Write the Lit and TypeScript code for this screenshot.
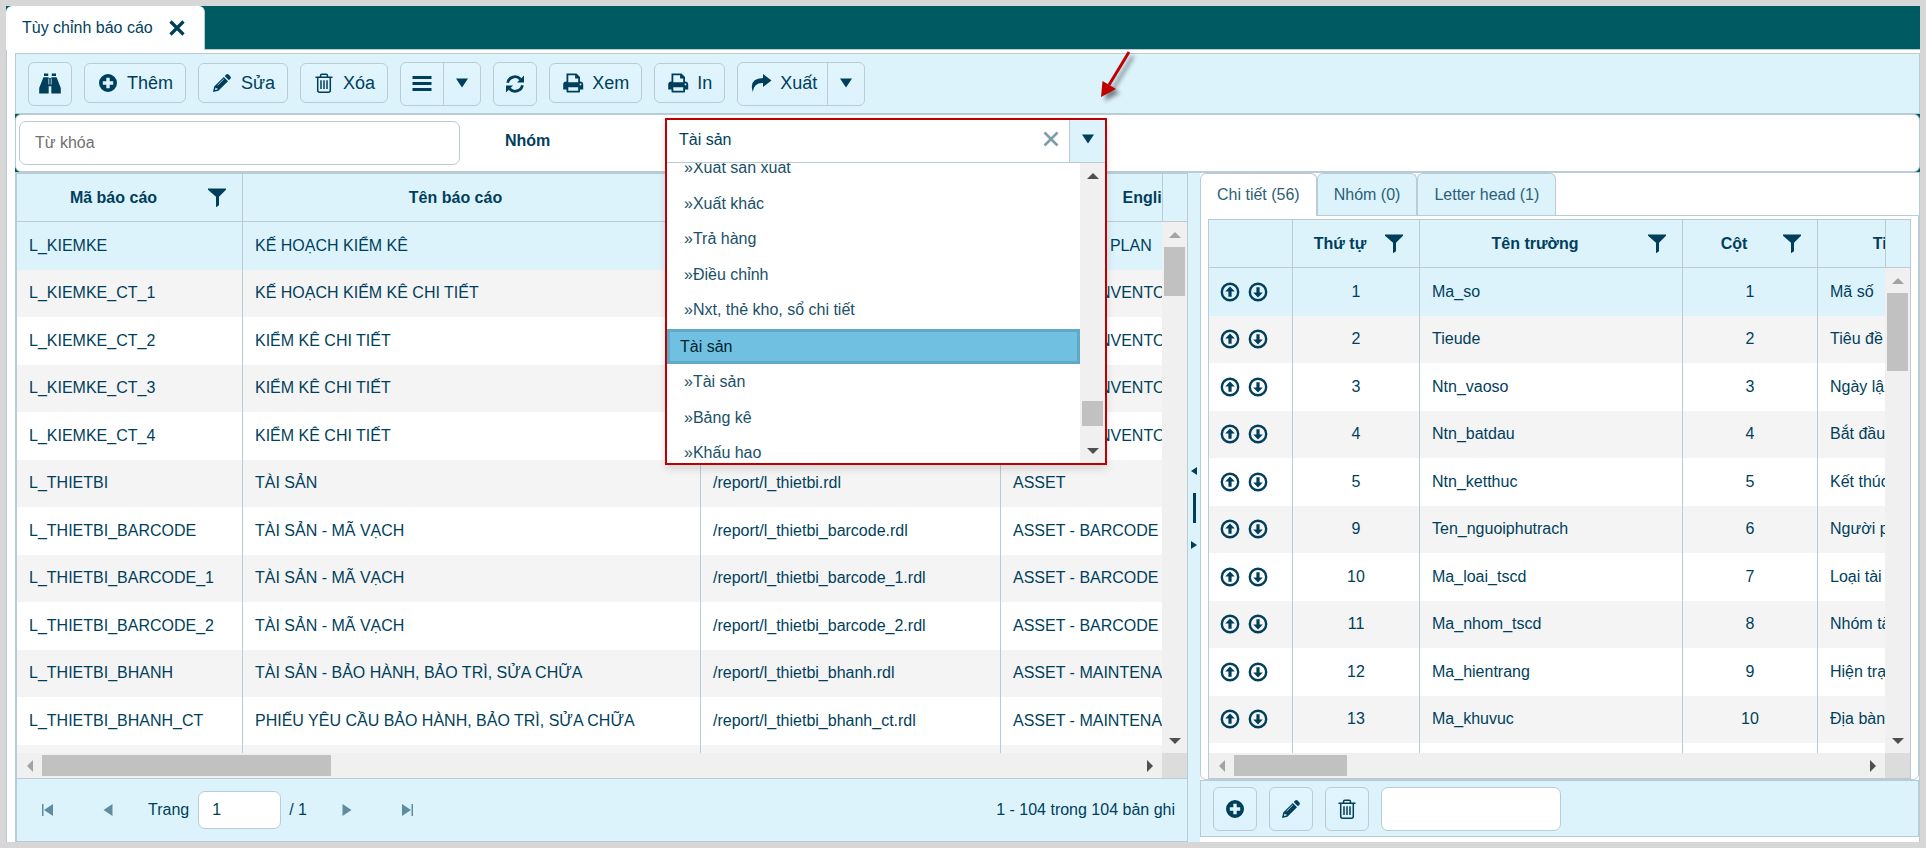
import { LitElement, html, css, svg } from "lit";
import { customElement, property, state } from "lit/decorators.js";
import { classMap } from "lit/directives/class-map.js";

const shared = css`
  :host, *, *::before, *::after { box-sizing: border-box; }
  button, input { font: inherit; color: inherit; margin: 0; }
  button { background: none; border: 0; padding: 0; cursor: pointer; }
  svg { display: block; flex: none; }
`;

const glyphs: Record<string, unknown> = {
  binoculars: svg`<path d="M5 .5h4.200v2.600H5zM12.800.5H17v2.600h-4.200zM4.400 4.200h5.300v16.300H.2v-5.500zM12.300 4.200h5.300l4.200 10.800v5.500h-9.500zM9.700 5h2.600v8.200H9.700z"/><path d="M9.800 5.500v6M12.200 5.500v6" stroke="#dcf3fc" stroke-width=".8"/>`,
  plus: svg`<path fill-rule="evenodd" d="M11 2a9 9 0 1 0 0 18a9 9 0 0 0 0-18zM9.300 5.800h3.400v3.500h3.500v3.400h-3.500v3.500H9.300v-3.500H5.800V9.300h3.500z"/>`,
  pencil: svg`<path d="M15.200 2.600q1.200-1.200 2.400 0l1.800 1.800q1.200 1.200 0 2.400l-1.500 1.500-4.200-4.200z"/><path fill-rule="evenodd" d="M12.800 5l4.200 4.200-9.600 9.600L2 20l1.200-5.400zM4.600 15.600l-.7 2.500 2.500-.7v-1.200H5.200z"/><path d="M6.600 13.200l6.200-6.200" stroke="#dcf3fc" stroke-width=".8" fill="none"/>`,
  trash: svg`<g fill="none" stroke="currentColor" stroke-width="1.500"><path d="M2.500 5.200h17M7.500 5V3.700q0-1.500 1.500-1.500h4q1.500 0 1.500 1.500V5M4.700 5.200v13q0 2 2 2h8.600q2 0 2-2v-13M8 8.300v8.600M11 8.300v8.600M14 8.300v8.600"/></g>`,
  bars: svg`<path d="M1.500 4h19v3h-19zM1.500 10h19v3h-19zM1.500 16h19v3h-19z"/>`,
  refresh: svg`<g fill="none" stroke="currentColor" stroke-width="2.800"><path d="M3.600 9.800A7.500 7.500 0 0 1 16.500 6.200M18.400 12.200A7.500 7.500 0 0 1 5.500 15.800"/></g><path d="M20 2.500v7h-7zM2 19.500v-7h7z"/>`,
  print: svg`<path fill-rule="evenodd" d="M4.500 1.500h10l3.500 3.500v4.500q3.200 0 3.200 3v5.100H18v2q0 .9-.9.900H5.400q-.9 0-.9-.9v-2H1.200v-5.100q0-3 3.300-3zM6.300 3.200v7h9.900V6.500h-3.100V3.200zM6.300 15.300v3.500h9.900v-3.500zM18.500 11.500a.9.9 0 1 0 .01 0z"/>`,
  share: svg`<path d="M13 2l8.500 6.500L13 15v-4Q4 10.500 2.800 20Q-1.500 6.500 13 6z"/>`,
  filter: svg`<path d="M2 1.500h18v1.200l-7 7v8.600l-3 2V9.700L2 2.700z"/>`,
  close: svg`<path d="M4.500 4.500l13 13M17.500 4.500l-13 13" stroke="currentColor" stroke-width="3.200" fill="none"/>`,
  clear: svg`<path d="M4.500 4.500l13 13M17.500 4.500l-13 13" stroke="currentColor" stroke-width="2.600" fill="none"/>`,
  caret: svg`<path d="M5 6.500h12L11 15.500z"/>`,
  moveUp: svg`<circle cx="11" cy="11" r="8.200" fill="none" stroke="currentColor" stroke-width="2.400"/><path d="M11 5.500l4.800 5h-3.200v5.300H9.400v-5.300H6.200z"/>`,
  moveDown: svg`<circle cx="11" cy="11" r="8.200" fill="none" stroke="currentColor" stroke-width="2.400"/><path d="M11 16.500l-4.800-5h3.200V6.200h3.200v5.300h3.200z"/>`,
  prev: svg`<path d="M6.500 11L15.500 5v12z"/>`,
  next: svg`<path d="M15.500 11L6.500 5v12z"/>`,
  first: svg`<path d="M7 11L16 5v12zM5 5h1.500v12H5z"/>`,
  last: svg`<path d="M15 11L6 5v12zM15.500 5H17v12h-1.500z"/>`,
};

@customElement("ui-icon")
class UiIcon extends LitElement {
  @property() name = "";
  @property({ type: Number }) size = 22;
  static styles = css`:host { display: block; flex: none; } svg { display: block; fill: currentColor; }`;
  render() {
    return html`<svg width=${this.size} height=${this.size} viewBox="0 0 22 22" aria-hidden="true">${glyphs[this.name]}</svg>`;
  }
}

@customElement("scroll-track")
class ScrollTrack extends LitElement {
  @property({ reflect: true }) dir = "v";
  @property({ type: Number }) before = 0;
  @property({ type: Number }) thumb = 50;
  @property({ type: Boolean }) atStart = false;
  static styles = css`
    :host { display: flex; background: #f0f0f0; overflow: hidden; }
    .track { flex: 1; display: flex; flex-direction: column; min-width: 0; min-height: 0; }
    .arrow { flex: none; width: 25px; height: 25px; display: grid; place-items: center; color: #4f4f4f; }
    .dim { color: #a3a3a3; }
    .rail { flex: 1; padding: 0 2px; }
    .thumb { background: #c1c1c1; }
    svg { display: block; fill: currentColor; }
    .h { flex-direction: row; }
    .h .rail { padding: 2px 0; display: flex; }
  `;
  render() {
    const h = this.dir === "h";
    const size = h
      ? `margin-left:${this.before}px;width:${this.thumb}px`
      : `margin-top:${this.before}px;height:${this.thumb}px`;
    return html`<div class=${classMap({ track: true, h })}>
      <span class=${classMap({ arrow: true, dim: this.atStart })}>
        <svg width="12" height="12"><path d=${h ? "M9 0v12L3 6z" : "M0 9h12L6 3z"} /></svg>
      </span>
      <div class="rail"><div class="thumb" style=${size}></div></div>
      <span class="arrow"><svg width="12" height="12"><path d=${h ? "M3 0v12l6-6z" : "M0 3h12L6 9z"} /></svg></span>
    </div>`;
  }
}

interface Column { title: string; width: number; center?: boolean; plain?: boolean }

@customElement("data-grid")
class DataGrid extends LitElement {
  @property({ attribute: false }) columns: Column[] = [];
  @property({ attribute: false }) rows: unknown[][] = [];
  @property({ type: Number }) vThumb = 50;
  @property({ type: Number }) hThumb = 289;
  @property() label = "";
  @state() selected = 0;
  static styles = [shared, css`
    :host { display: grid; grid-template: 48px minmax(0, 1fr) 25px / minmax(0, 1fr) 25px; min-height: 0; }
    .view { grid-area: 1 / 1 / 3 / 2; overflow: hidden; min-height: 0; }
    table { table-layout: fixed; border-collapse: separate; border-spacing: 0; }
    th { height: 48px; padding: 0; background: #dcf3fc; border-right: 1px solid #b9ccd5; border-bottom: 1px solid #b9ccd5; }
    .head { display: flex; align-items: center; padding-right: 14px; }
    .title { flex: 1; white-space: nowrap; }
    .head button { margin-left: -4px; }
    td { height: 47px; padding: 0 12px 1px; border-right: 1px solid #b9ccd5; white-space: nowrap; overflow: hidden; background: #fff; }
    tr:nth-child(odd) td { height: 48px; }
    tr:nth-child(even) td { background: #f4f4f4; }
    tr.on td { background: #dcf3fc; }
    td.center { text-align: center; }
    .fill { background: #dcf3fc; border-left: 1px solid #b9ccd5; border-bottom: 1px solid #b9ccd5; }
    .corner { background: #dcdcdc; }
  `];
  render() {
    const total = this.columns.reduce((sum, c) => sum + c.width, 0);
    return html`
      <div class="view">
        <table aria-label=${this.label} style="width:${total}px">
          <colgroup>${this.columns.map((c) => html`<col style="width:${c.width}px" />`)}</colgroup>
          <thead><tr>${this.columns.map((c) => html`<th scope="col">${c.plain ? "" : html`
            <div class="head"><span class="title">${c.title}</span>
            <button aria-label="Lọc ${c.title}"><ui-icon name="filter"></ui-icon></button></div>`}</th>`)}</tr></thead>
          <tbody>${this.rows.map((r, i) => html`
            <tr class=${classMap({ on: i === this.selected })} @click=${() => (this.selected = i)}>
              ${this.columns.map((c, j) => html`<td class=${classMap({ center: !!c.center })}>${r[j]}</td>`)}
            </tr>`)}</tbody>
        </table>
      </div>
      <div class="fill"></div>
      <scroll-track dir="v" .thumb=${this.vThumb} .atStart=${true}></scroll-track>
      <scroll-track dir="h" .thumb=${this.hThumb} .atStart=${true}></scroll-track>
      <div class="corner"></div>`;
  }
}

@customElement("group-combo")
class GroupCombo extends LitElement {
  @state() value = "Tài sản";
  private groups = [
    ["Xuất sản xuất", true], ["Xuất khác", true], ["Trả hàng", true], ["Điều chỉnh", true],
    ["Nxt, thẻ kho, sổ chi tiết", true], ["Tài sản", false], ["Tài sản", true], ["Bảng kê", true], ["Khấu hao", true],
  ] as [string, boolean][];
  static styles = [shared, css`
    :host { display: block; position: relative; height: 44px; }
    .panel { position: absolute; inset: 0 0 auto 0; z-index: 5; background: #fff; border: 2px solid #bf0000; box-shadow: 0 4px 8px rgba(0, 0, 0, 0.12); }
    .field { display: flex; height: 43px; border-bottom: 1px solid #b9ccd5; }
    .field input { flex: 1; min-width: 0; border: 0; padding: 0 12px 3px; outline: 0; background: none; }
    .clear { width: 36px; display: grid; place-items: center; color: #7e9cab; padding-bottom: 4px; }
    .open { width: 36px; display: grid; place-items: center; background: #dcf3fc; border-left: 1px solid #b9ccd5; padding-bottom: 4px; }
    .drop { display: flex; height: 300px; overflow: hidden; }
    ul { flex: 1; list-style: none; margin: -12px 0 0; padding: 0; color: #1a5069; }
    li { height: 35px; display: flex; align-items: center; padding: 0 17px 2px; }
    li:nth-child(odd) { height: 36px; }
    li.on { height: 35px; margin-bottom: 1px; padding: 0 10px; border: 3px solid #62a9c7; background: #70c1e1; color: #001f2e; }
    .arrow { position: absolute; z-index: 6; right: -30px; top: -76px; pointer-events: none; filter: drop-shadow(4px 4px 2px rgba(0, 0, 0, 0.45)); }
  `];
  render() {
    return html`
      <div class="panel">
        <div class="field">
          <input id="group" type="text" role="combobox" aria-label="Nhóm" aria-expanded="true" aria-controls="groups" .value=${this.value} />
          <button class="clear" aria-label="Xóa lựa chọn" @click=${() => (this.value = "")}><ui-icon name="clear"></ui-icon></button>
          <button class="open" aria-label="Mở danh sách"><ui-icon name="caret"></ui-icon></button>
        </div>
        <div class="drop">
          <ul id="groups" role="listbox">${this.groups.map(([name, child], i) => html`
            <li role="option" aria-selected=${i === 5} class=${classMap({ on: i === 5 })}>${child ? "»" : ""}${name}</li>`)}</ul>
          <scroll-track dir="v" .before=${213} .thumb=${25}></scroll-track>
        </div>
      </div>
      <svg class="arrow" width="60" height="70" aria-hidden="true">
        <path d="M52 10L32 43" stroke="#bf0000" stroke-width="3" />
        <path d="M24 55l1.500-16L39 47z" fill="#bf0000" />
      </svg>`;
  }
}

const reports: unknown[][] = [
  ["L_KIEMKE", "KẾ HOẠCH KIỂM KÊ", "", "INVENTORY PLAN"],
  ["L_KIEMKE_CT_1", "KẾ HOẠCH KIỂM KÊ CHI TIẾT", "", "DETAILED INVENTORY"],
  ["L_KIEMKE_CT_2", "KIỂM KÊ CHI TIẾT", "", "DETAILED INVENTORY"],
  ["L_KIEMKE_CT_3", "KIỂM KÊ CHI TIẾT", "", "DETAILED INVENTORY"],
  ["L_KIEMKE_CT_4", "KIỂM KÊ CHI TIẾT", "", "DETAILED INVENTORY"],
  ["L_THIETBI", "TÀI SẢN", "/report/l_thietbi.rdl", "ASSET"],
  ["L_THIETBI_BARCODE", "TÀI SẢN - MÃ VẠCH", "/report/l_thietbi_barcode.rdl", "ASSET - BARCODE"],
  ["L_THIETBI_BARCODE_1", "TÀI SẢN - MÃ VẠCH", "/report/l_thietbi_barcode_1.rdl", "ASSET - BARCODE"],
  ["L_THIETBI_BARCODE_2", "TÀI SẢN - MÃ VẠCH", "/report/l_thietbi_barcode_2.rdl", "ASSET - BARCODE"],
  ["L_THIETBI_BHANH", "TÀI SẢN - BẢO HÀNH, BẢO TRÌ, SỬA CHỮA", "/report/l_thietbi_bhanh.rdl", "ASSET - MAINTENANCE"],
  ["L_THIETBI_BHANH_CT", "PHIẾU YÊU CẦU BẢO HÀNH, BẢO TRÌ, SỬA CHỮA", "/report/l_thietbi_bhanh_ct.rdl", "ASSET - MAINTENANCE"],
  ["", "", "", ""],
];
const reportColumns: Column[] = [
  { title: "Mã báo cáo", width: 226 },
  { title: "Tên báo cáo", width: 458 },
  { title: "", width: 300, plain: true },
  { title: "English name", width: 380 },
];

const fields: [number, string, number, string][] = [
  [1, "Ma_so", 1, "Mã số"], [2, "Tieude", 2, "Tiêu đề"], [3, "Ntn_vaoso", 3, "Ngày lập"],
  [4, "Ntn_batdau", 4, "Bắt đầu"], [5, "Ntn_ketthuc", 5, "Kết thúc"], [9, "Ten_nguoiphutrach", 6, "Người phụ trách"],
  [10, "Ma_loai_tscd", 7, "Loại tài sản"], [11, "Ma_nhom_tscd", 8, "Nhóm tài sản"],
  [12, "Ma_hientrang", 9, "Hiện trạng"], [13, "Ma_khuvuc", 10, "Địa bàn"],
];
const fieldColumns: Column[] = [
  { title: "", width: 84, plain: true },
  { title: "Thứ tự", width: 127, center: true },
  { title: "Tên trường", width: 263 },
  { title: "Cột", width: 135, center: true },
  { title: "Tiêu đề", width: 198 },
];

@customElement("move-buttons")
class MoveButtons extends LitElement {
  static styles = [shared, css`
    :host { display: flex; gap: 6px; margin-left: -2px; }
  `];
  render() {
    return html`<button aria-label="Lên"><ui-icon name="moveUp"></ui-icon></button>
      <button aria-label="Xuống"><ui-icon name="moveDown"></ui-icon></button>`;
  }
}

@customElement("app-root")
class AppRoot extends LitElement {
  @state() tab = 0;
  static styles = [shared, css`
    :host { display: block; height: 100vh; background: #d7d7d7; padding: 6px; font: 16px/20px "Liberation Sans", Arial, sans-serif; color: #003f5c; }
    .window { height: 100%; display: flex; flex-direction: column; background: #005a61; }
    .titlebar { display: flex; height: 43px; }
    .doc { display: flex; align-items: center; gap: 13px; height: 44px; padding: 0 16px 1px; margin-bottom: -1px; background: #fff; border-right: 1px solid #b9ccd5; border-radius: 6px 6px 0 0; z-index: 1; }
    .main { flex: 1; min-height: 0; display: flex; flex-direction: column; background: #fff; border: solid #b9ccd5; border-width: 1px 0 0 1px; padding: 3px 0 0 8px; }
    .toolbar { display: flex; align-items: center; gap: 12px; padding: 8px 12px 7px; background: #dcf3fc; border: 1px solid #b9ccd5; }
    .tool { display: flex; align-items: center; justify-content: center; gap: 8px; height: 40px; padding: 0 12px; border: 1px solid #b9ccd5; border-radius: 6px; background: linear-gradient(#e1f5fd, #dcf2fc); font-size: 18px; margin-bottom: 2px; }
    .square { width: 44px; height: 44px; padding: 0; margin: 0; }
    .split { display: flex; height: 44px; border: 1px solid #b9ccd5; border-radius: 6px; background: linear-gradient(#e1f5fd, #dcf2fc); font-size: 18px; }
    .split button { display: flex; align-items: center; justify-content: center; gap: 8px; padding: 0 10px 2px; }
    .split button.wide { padding: 0 10px 2px 12px; }
    .split button + button { width: 37px; padding: 0 0 2px; border-left: 1px solid #b9ccd5; }
    .band { background: #005a61; }
    .search { display: flex; align-items: center; background: #fff; border: 1px solid #b9ccd5; border-radius: 6px; height: 58px; padding: 0 3px; }
    .box { border: 1px solid #b9ccd5; border-radius: 7px; background: #fff; padding: 0 14px; height: 44px; }
    .box::placeholder { color: #707070; opacity: 1; }
    .key { width: 441px; padding: 0 15px; }
    .search label { width: 160px; margin-left: 45px; padding-bottom: 4px; font-weight: bold; }
    group-combo { width: 442px; margin-bottom: 6px; }
    .panes { flex: 1; min-height: 0; display: grid; grid-template-columns: minmax(0, 1173fr) 12px minmax(0, 720fr); }
    .left { display: flex; flex-direction: column; min-height: 0; border: solid #b9ccd5; border-width: 2px 1px 1px 2px; background: #dcf3fc; }
    .left data-grid { flex: 1; }
    .pager { display: flex; align-items: center; height: 63px; padding: 0 12px 0 8px; border-top: 1px solid #b9ccd5; }
    .pager .nav { width: 46px; height: 40px; display: grid; place-items: center; color: #5e8ca0; }
    .pager .nav + .nav { margin-left: 14px; }
    .pager label { margin: 0 9px 0 17px; }
    .pager .box { width: 83px; height: 38px; padding: 0 13px; }
    .pager .of { margin: 0 17px 0 8px; }
    .pager .count { margin-left: auto; }
    .splitter { display: flex; flex-direction: column; align-items: center; justify-content: center; gap: 18px; background: #dcf3fc; border-top: 1px solid #b9ccd5; }
    .splitter .bar { width: 3px; height: 30px; background: #003f5c; }
    .right { display: flex; flex-direction: column; min-height: 0; border: solid #b9ccd5; border-width: 1px 1px 0 0; padding-bottom: 5px; }
    .tabs { display: flex; height: 42px; }
    .tabs button { height: 42px; padding: 0 16px; color: #2b5f77; border: solid #b9ccd5; border-width: 1px 1px 0; border-radius: 6px 6px 0 0; background: #dcf3fc; }
    .tabs button.on { height: 43px; background: #fff; z-index: 1; }
    .sheet { flex: 1; min-height: 0; display: flex; border: 1px solid #b9ccd5; border-radius: 0 0 6px 6px; padding: 3px 7px 0; }
    .sheet data-grid { flex: 1; min-width: 0; border: 1px solid #b9ccd5; }
    .foot { display: flex; align-items: center; gap: 12px; height: 57px; padding: 0 12px; border: 1px solid #b9ccd5; background: #dcf3fc; }
    .foot .box { width: 180px; }
  `];

  private tool(icon: string, text: string) {
    return html`<button class="tool"><ui-icon name=${icon} size="22"></ui-icon>${text}</button>`;
  }
  private square(icon: string, label: string, size = 22) {
    return html`<button class="tool square" aria-label=${label}><ui-icon name=${icon} size=${size}></ui-icon></button>`;
  }
  private nav(icon: string, label: string) {
    return html`<button class="nav" aria-label=${label}><ui-icon name=${icon}></ui-icon></button>`;
  }

  render() {
    const rows = fields.map((f) => [html`<move-buttons></move-buttons>`, ...f]) as unknown[][];
    rows.push(["", "", "", "", ""]);
    return html`
      <div class="window">
        <header class="titlebar">
          <div class="doc"><span>Tùy chỉnh báo cáo</span>
            <button aria-label="Đóng"><ui-icon name="close"></ui-icon></button></div>
        </header>
        <main class="main">
          <div class="toolbar">
            ${this.square("binoculars", "Tìm")}
            ${this.tool("plus", "Thêm")}${this.tool("pencil", "Sửa")}${this.tool("trash", "Xóa")}
            <div class="split">
              <button aria-label="Danh sách"><ui-icon name="bars"></ui-icon></button>
              <button aria-label="Thêm lựa chọn"><ui-icon name="caret"></ui-icon></button>
            </div>
            ${this.square("refresh", "Làm mới")}
            ${this.tool("print", "Xem")}${this.tool("print", "In")}
            <div class="split">
              <button class="wide"><ui-icon name="share"></ui-icon>Xuất</button>
              <button aria-label="Lựa chọn xuất"><ui-icon name="caret"></ui-icon></button>
            </div>
          </div>
          <div class="band"><div class="search">
            <input id="key" class="box key" type="text" placeholder="Từ khóa" aria-label="Từ khóa" />
            <label for="combo">Nhóm</label>
            <group-combo id="combo"></group-combo>
          </div></div>
          <div class="panes">
            <section class="left">
              <data-grid label="Báo cáo" .columns=${reportColumns} .rows=${reports} .vThumb=${49} .hThumb=${289}></data-grid>
              <div class="pager">
                ${this.nav("first", "Trang đầu")}${this.nav("prev", "Trang trước")}
                <label for="page">Trang</label><input id="page" class="box" type="text" value="1" />
                <span class="of">/ 1</span>
                ${this.nav("next", "Trang sau")}${this.nav("last", "Trang cuối")}
                <span class="count">1 - 104 trong 104 bản ghi</span>
              </div>
            </section>
            <div class="splitter">
              <svg width="6" height="8" fill="#003f5c"><path d="M6 0v8L0 4z" /></svg>
              <span class="bar"></span>
              <svg width="6" height="8" fill="#003f5c"><path d="M0 0v8l6-4z" /></svg>
            </div>
            <section class="right">
              <div class="tabs" role="tablist">${["Chi tiết (56)", "Nhóm (0)", "Letter head (1)"].map((t, i) => html`
                <button role="tab" aria-selected=${i === this.tab} class=${classMap({ on: i === this.tab })} @click=${() => (this.tab = i)}>${t}</button>`)}
              </div>
              <div class="sheet">
                <data-grid label="Chi tiết" .columns=${fieldColumns} .rows=${rows} .vThumb=${78} .hThumb=${113}></data-grid>
              </div>
              <div class="foot">
                ${this.square("plus", "Thêm dòng")}${this.square("pencil", "Sửa dòng")}${this.square("trash", "Xóa dòng")}
                <input class="box" type="text" aria-label="Giá trị" />
              </div>
            </section>
          </div>
        </main>
      </div>`;
  }
}
